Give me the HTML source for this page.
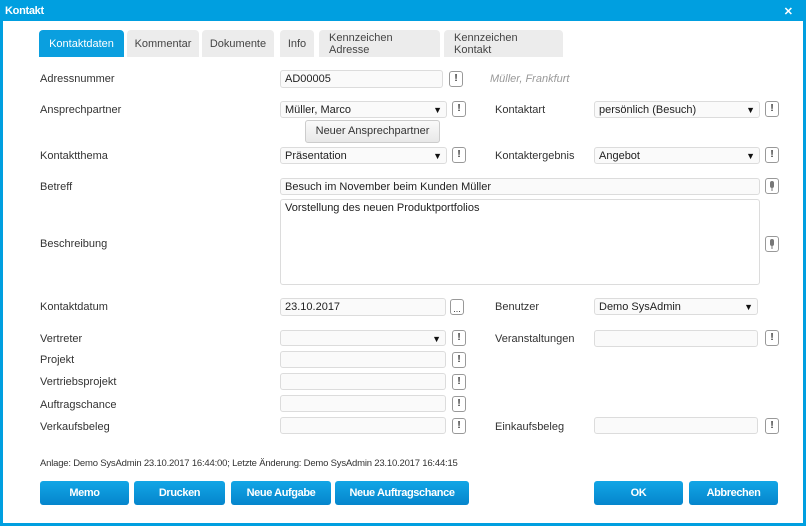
<!DOCTYPE html>
<html><head><meta charset="utf-8"><style>
*{box-sizing:border-box;margin:0;padding:0}
body{width:806px;height:526px;background:#fff;font-family:"Liberation Sans",Arial,sans-serif;font-size:11px;color:#333;position:relative;overflow:hidden}
.a{position:absolute}
#frame{left:0;top:0;width:806px;height:526px;border:3px solid #009fe0;border-top:none}
#title{left:0;top:0;width:806px;height:21px;background:#009fe0;color:#fff;font-weight:bold;font-size:11px;padding:5px 5px;letter-spacing:-0.3px}
#x{right:13px;top:5px;color:#fff;font-weight:bold;font-size:11px}
.tab{top:30px;height:27px;background:#ececec;color:#444;border-radius:4px 4px 0 0;font-size:11px;display:flex;align-items:center;justify-content:center;line-height:12px}
.tab.l{justify-content:flex-start;padding-left:10px}
.tab.on{background:#0a9fdf;color:#fff}
.lbl{font-size:11px;color:#333;margin-top:1px}
.in{border:1px solid #dcdcdc;border-radius:3px;background:#fafafa;font-size:11px;color:#222;padding:1px 4px;line-height:14px}
.sel::after{content:"▼";position:absolute;right:4px;top:1px;font-size:9px;color:#111}
.ex{width:14px;height:16px;border:1px solid #999;border-radius:3px;font-weight:bold;font-size:10px;text-align:center;line-height:14px;color:#333;background:#fff}
.btn{top:481px;height:24px;border-radius:3px;background:linear-gradient(#12a6e6,#0585cc);color:#fff;font-weight:bold;font-size:11px;display:flex;align-items:center;justify-content:center;letter-spacing:-0.4px}
</style></head><body>
<div class="a" id="frame"></div>
<div class="a" id="title">Kontakt</div>
<div class="a" id="x">✕</div>

<div class="a tab on" style="left:39px;width:85px">Kontaktdaten</div>
<div class="a tab" style="left:127px;width:72px">Kommentar</div>
<div class="a tab" style="left:202px;width:72px">Dokumente</div>
<div class="a tab" style="left:280px;width:34px">Info</div>
<div class="a tab l" style="left:319px;width:121px">Kennzeichen<br>Adresse</div>
<div class="a tab l" style="left:444px;width:119px">Kennzeichen<br>Kontakt</div>

<div class="a lbl" style="left:40px;top:72px">Adressnummer</div>
<div class="a in" style="left:280px;top:70px;width:163px;height:18px">AD00005</div>
<div class="a ex" style="left:449px;top:71px">!</div>
<div class="a" style="left:490px;top:73px;color:#999;font-style:italic">Müller, Frankfurt</div>

<div class="a lbl" style="left:40px;top:103px">Ansprechpartner</div>
<div class="a in sel" style="left:280px;top:101px;width:167px;height:17px">Müller, Marco</div>
<div class="a ex" style="left:452px;top:101px">!</div>
<div class="a lbl" style="left:495px;top:103px">Kontaktart</div>
<div class="a in sel" style="left:594px;top:101px;width:166px;height:17px">persönlich (Besuch)</div>
<div class="a ex" style="left:765px;top:101px">!</div>

<div class="a" style="left:305px;top:120px;width:135px;height:23px;border:1px solid #ccc;border-radius:3px;background:linear-gradient(#fafafa,#e8e8e8);text-align:center;line-height:21px">Neuer Ansprechpartner</div>

<div class="a lbl" style="left:40px;top:149px">Kontaktthema</div>
<div class="a in sel" style="left:280px;top:147px;width:167px;height:17px">Präsentation</div>
<div class="a ex" style="left:452px;top:147px">!</div>
<div class="a lbl" style="left:495px;top:149px">Kontaktergebnis</div>
<div class="a in sel" style="left:594px;top:147px;width:166px;height:17px">Angebot</div>
<div class="a ex" style="left:765px;top:147px">!</div>

<div class="a lbl" style="left:40px;top:180px">Betreff</div>
<div class="a in" style="left:280px;top:178px;width:480px;height:17px">Besuch im November beim Kunden Müller</div>
<div class="a ex" style="left:765px;top:178px"><svg width="12" height="14" viewBox="0 0 12 14"><rect x="4" y="2" width="4" height="7" rx="2" fill="#777"/><path d="M6 9v3" stroke="#777" stroke-width="1"/></svg></div>

<div class="a lbl" style="left:40px;top:237px">Beschreibung</div>
<div class="a in" style="left:280px;top:199px;width:480px;height:86px;background:#fff">Vorstellung des neuen Produktportfolios</div>
<div class="a ex" style="left:765px;top:236px"><svg width="12" height="14" viewBox="0 0 12 14"><rect x="4" y="2" width="4" height="7" rx="2" fill="#777"/><path d="M6 9v3" stroke="#777" stroke-width="1"/></svg></div>

<div class="a lbl" style="left:40px;top:300px">Kontaktdatum</div>
<div class="a in" style="left:280px;top:298px;width:166px;height:18px">23.10.2017</div>
<div class="a ex" style="left:450px;top:299px;font-weight:normal;font-size:9px;line-height:18px">...</div>
<div class="a lbl" style="left:495px;top:300px">Benutzer</div>
<div class="a in sel" style="left:594px;top:298px;width:164px;height:17px">Demo SysAdmin</div>

<div class="a lbl" style="left:40px;top:332px">Vertreter</div>
<div class="a in sel" style="left:280px;top:330px;width:166px;height:16px"></div>
<div class="a ex" style="left:452px;top:330px">!</div>
<div class="a lbl" style="left:495px;top:332px">Veranstaltungen</div>
<div class="a in" style="left:594px;top:330px;width:164px;height:17px"></div>
<div class="a ex" style="left:765px;top:330px">!</div>

<div class="a lbl" style="left:40px;top:353px">Projekt</div>
<div class="a in" style="left:280px;top:351px;width:166px;height:17px"></div>
<div class="a ex" style="left:452px;top:352px">!</div>
<div class="a lbl" style="left:40px;top:375px">Vertriebsprojekt</div>
<div class="a in" style="left:280px;top:373px;width:166px;height:17px"></div>
<div class="a ex" style="left:452px;top:374px">!</div>
<div class="a lbl" style="left:40px;top:398px">Auftragschance</div>
<div class="a in" style="left:280px;top:395px;width:166px;height:17px"></div>
<div class="a ex" style="left:452px;top:396px">!</div>
<div class="a lbl" style="left:40px;top:420px">Verkaufsbeleg</div>
<div class="a in" style="left:280px;top:417px;width:166px;height:17px"></div>
<div class="a ex" style="left:452px;top:418px">!</div>
<div class="a lbl" style="left:495px;top:420px">Einkaufsbeleg</div>
<div class="a in" style="left:594px;top:417px;width:164px;height:17px"></div>
<div class="a ex" style="left:765px;top:418px">!</div>

<div class="a" style="left:40px;top:458px;font-size:9.5px;color:#333;letter-spacing:-0.2px">Anlage: Demo SysAdmin 23.10.2017 16:44:00; Letzte Änderung: Demo SysAdmin 23.10.2017 16:44:15</div>

<div class="a btn" style="left:40px;width:89px">Memo</div>
<div class="a btn" style="left:134px;width:91px">Drucken</div>
<div class="a btn" style="left:231px;width:100px">Neue Aufgabe</div>
<div class="a btn" style="left:335px;width:134px">Neue Auftragschance</div>
<div class="a btn" style="left:594px;width:89px">OK</div>
<div class="a btn" style="left:689px;width:89px">Abbrechen</div>
</body></html>
